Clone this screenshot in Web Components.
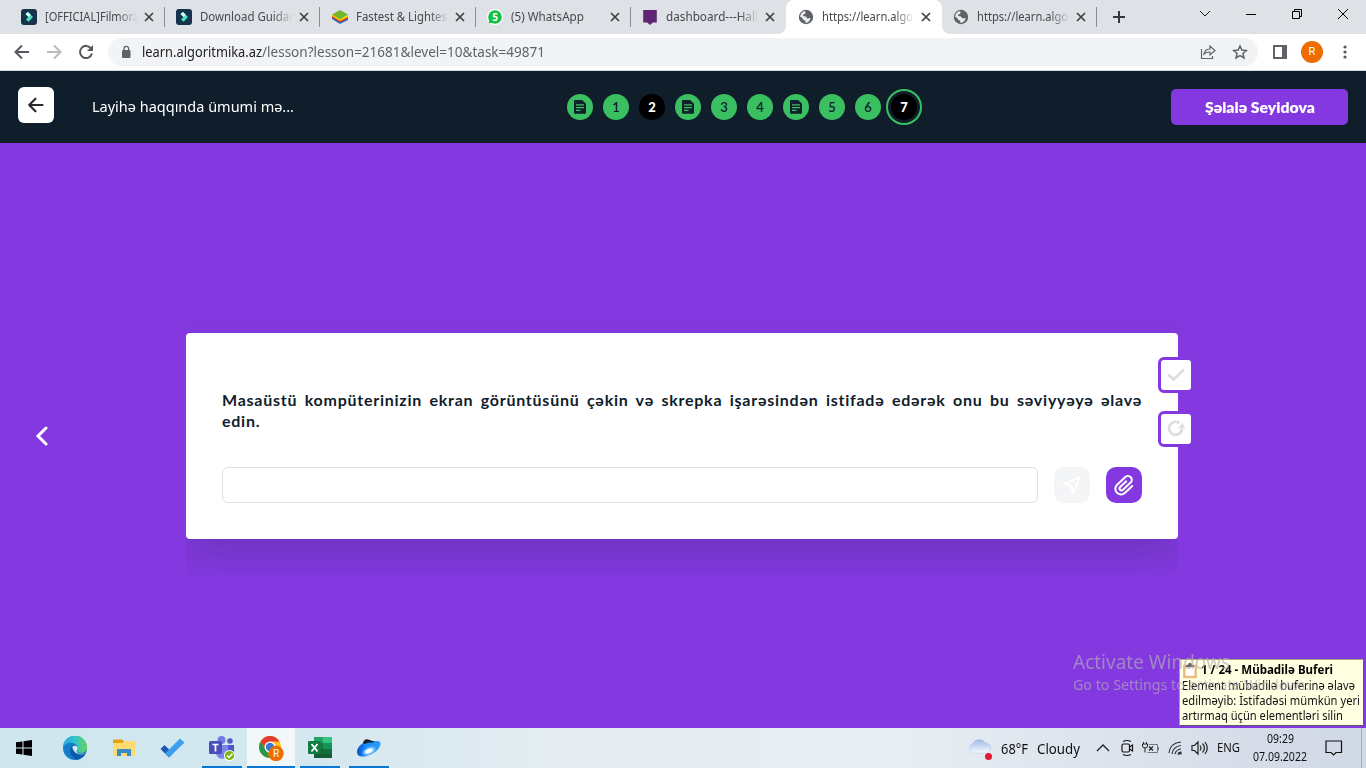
<!DOCTYPE html>
<html lang="az"><head><meta charset="utf-8"><title>Lesson</title>
<style>html,body{margin:0;height:100%;overflow:hidden}body{font-family:"Noto Sans","Open Sans",sans-serif}</style></head>
<body><lesson-desktop></lesson-desktop>
<script>
const make=(name,html,init)=>customElements.define(name,class extends HTMLElement{
  connectedCallback(){ if(this.shadowRoot)return; const r=this.attachShadow({mode:'open'});
    r.innerHTML='<style>*{box-sizing:border-box}svg{display:block;flex:none}</style>'+(typeof html==='function'?html(this):html); if(init)init(this,r);}
});

/* text run condensed or widened to the width of its label slot */
make('fit-text',`<style>:host{display:block;white-space:nowrap;flex:none}span{display:inline-block;transform-origin:0 50%}</style><span><slot></slot></span>`,(h,r)=>{
  const w=+h.getAttribute('w'),s=r.querySelector('span');h.style.width=w+'px';
  const n=s.offsetWidth; if(n) s.style.transform=`scaleX(${w/s.getBoundingClientRect().width})`;
});

const G={
 filmora:`<svg width="16" height="16" viewBox="0 0 16 16"><rect width="16" height="16" rx="3" fill="#15334a"/><path d="M4.500 5 7 3l5 5-4.500 4.800L5 10.500 7.500 8z" fill="#4fe3c1"/><path d="M4.500 5 7 3l2.700 2.700L7.500 8z" fill="#d9fff5"/></svg>`,
 blue:`<svg width="18" height="16" viewBox="0 0 18 16"><path d="m1 10 8 5 8-4V8L9 12 1 8z" fill="#1c74d8"/><path d="m1 8.500 8 5 8-4V7L9 11 1 6.500z" fill="#e62920"/><path d="m1 7 8 5 8-4V6L9 10 1 5z" fill="#ffd900"/><path d="m1 5.500 8-4.500 8 4.500-8 5z" fill="#73b72c"/></svg>`,
 wa:`<svg width="16" height="16" viewBox="0 0 16 16"><circle cx="8" cy="8" r="8" fill="#fff"/><path d="m.5 15 1.500-4.400L6 14z" fill="#fff"/><circle cx="8" cy="8" r="6.800" fill="#12c143"/><path d="m1.500 14.500 1-4 3 3z" fill="#12c143"/><text x="8" y="11.500" text-anchor="middle" font-size="10" font-weight="700" fill="#fff">5</text></svg>`,
 dash:`<svg width="16" height="17" viewBox="0 0 16 17"><path d="M1.200 1h13.600v12.500h-4L8 16l-2.800-2.500h-4z" fill="#602674"/></svg>`,
 globe:`<svg width="16" height="16" viewBox="0 0 16 16"><circle cx="8" cy="8" r="7.200" fill="#5f6368"/><path d="M7.500 2c-.9 1 .4 1.800-.2 2.600-.7.900-2.100.6-2.300 1.700-.1 1.100 1.700.9 2.800 1.200 1.200.4.700 1.500 1.600 1.900 1 .5 1.800-.6 3.100-.2A5.900 5.900 0 0 1 8 13.900c-.9-.3-.4-1.400-.9-2.100-.6-.8-2.200-.6-2.300-1.800-.1-1-1.200-1.800-2.700-2A5.900 5.900 0 0 1 7.500 2z" fill="#fff" opacity=".88"/></svg>`,
 x:`<svg width="12" height="12" viewBox="0 0 12 12" stroke="#3c4043" stroke-width="1.700"><path d="m2 2 8 8M10 2l-8 8"/></svg>`,
 doc:`<svg width="14" height="16" viewBox="0 0 14 16"><path d="M1.800 1h7.400L13 4.700v8.500c0 1-.6 1.600-1.500 1.600h-9C1.600 14.800 1 14.200 1 13.200V2c0-.7.300-1 .8-1z" fill="#10202c"/><path d="M3 5.800h8M3 8.600h8M3 11.300h4.500" stroke="#3abf61" stroke-width="1.200"/></svg>`
};

make('browser-tab',h=>`<style>:host{display:block;width:155.400px;height:34px;flex:none;font-size:12px;color:#45494d;position:relative}
.t{height:34px;display:grid;grid-template-columns:25px 94px 20px;padding-left:10.500px;align-items:center}
.i{width:18px;display:flex;justify-content:center}.c{overflow:hidden;line-height:18px;-webkit-mask:linear-gradient(90deg,#000 73px,transparent 93px)}
.x{display:flex;justify-content:center}:host([sep]) .t{background:linear-gradient(#888d93,#888d93) right 7px/1px 20px no-repeat}
:host([on]) .t{background:#fff;border-radius:8px 8px 0 0}
:host([on])::before,:host([on])::after{content:"";position:absolute;bottom:0;width:8px;height:8px}
:host([on])::before{left:-8px;background:radial-gradient(circle at 0 0,transparent 7.500px,#fff 8px)}
:host([on])::after{right:-8px;background:radial-gradient(circle at 100% 0,transparent 7.500px,#fff 8px)}</style>
<div class="t"><span class="i">${G[h.getAttribute('icon')]}</span><div class="c"><fit-text w="${h.getAttribute('w')}">${h.getAttribute('label').replace('&','&amp;')}</fit-text></div><span class="x">${G.x}</span></div>`);

make('browser-chrome',`<style>:host{display:block;height:71px;background:#fff;border-bottom:1px solid #d5d9dd}
.tabs{height:34px;background:#dee1e6;padding-left:9.400px;display:flex}.plus{margin-left:13.800px;align-self:center}
.win{margin-left:auto;display:flex;height:28px;align-items:center}.win svg{width:46px}
.bar{height:36px;display:flex;align-items:center}.nav{width:108px;display:flex;padding-left:14px;gap:16px}
.omni{width:1150px;height:28px;border-radius:14px;background:#f1f3f4;display:flex;align-items:center;padding-left:11px;font-size:14px;line-height:20px;color:#5f6368}
.omni .k{margin-right:9px}.dom{color:#202124}.acts{display:flex;margin-left:auto;gap:16px;padding-right:10px}
.right{display:flex;align-items:center;padding-left:14px}.av{width:22px;height:22px;border-radius:50%;background:#ef6c00;color:#fff;font:11px/22px Roboto;text-align:center;margin:0 14px 0 13px}</style>
<div class="tabs">
<browser-tab icon="filmora" label="[OFFICIAL]Filmora" w="94" sep></browser-tab><browser-tab icon="filmora" label="Download Guidar" w="94" sep></browser-tab><browser-tab icon="blue" label="Fastest & Lightes" w="91" sep></browser-tab><browser-tab icon="wa" label="(5) WhatsApp" w="73" sep></browser-tab><browser-tab icon="dash" label="dashboard---Hall" w="92"></browser-tab><browser-tab icon="globe" label="https://learn.algo" w="91" on></browser-tab><browser-tab icon="globe" label="https://learn.algo" w="91" sep></browser-tab>
<svg class="plus" width="16" height="16" stroke="#33373b" stroke-width="2"><path d="M8 2v12M2 8h12"/></svg>
<div class="win"><svg height="14" viewBox="-23 -7 46 14" fill="none" stroke="#222"><path d="m-5-3 5 5 5-5"/></svg><svg height="14" viewBox="-23 -7 46 14" stroke="#000"><path d="M-5 .5H5"/></svg><svg height="14" viewBox="-23 -7 46 14" fill="none" stroke="#000"><path d="M-4.500-2.500h7v7h-7zM-2.500-2.500v-2h7v7h-2"/></svg><svg height="14" viewBox="-23 -7 46 14" stroke="#000"><path d="m-5-5 10 10M5-5-5 5"/></svg></div>
</div>
<div class="bar"><div class="nav"><svg width="16" height="16" fill="none" stroke="#55595e" stroke-width="2"><path d="M15 8H2M8 1.500 1.500 8 8 14.500"/></svg><svg width="16" height="16" fill="none" stroke="#b9bcbf" stroke-width="2"><path d="M1 8h13M8 1.500 14.500 8 8 14.500"/></svg><svg width="16" height="16"><path d="M13.200 4.600A6.100 6.100 0 1 0 14 9.600" fill="none" stroke="#55595e" stroke-width="2"/><path d="M15 1v6H9z" fill="#55595e"/></svg></div>
<div class="omni"><svg class="k" width="14" height="14" viewBox="0 0 14 14"><rect x="3" y="5" width="8.500" height="8" rx="1" fill="#5f6368"/><path d="M5 5.500V3.600a2.300 2.300 0 0 1 4.600 0v1.900" fill="none" stroke="#5f6368" stroke-width="1.300"/></svg>
<fit-text class="dom" w="120">learn.algoritmika.az</fit-text><fit-text w="283">/lesson?lesson=21681&amp;level=10&amp;task=49871</fit-text>
<div class="acts"><svg width="17" height="17" viewBox="0 0 17 17" fill="none" stroke="#5f6368" stroke-width="1.200"><path d="M2.500 5v9.500h11V12M5 10c.7-3.200 2.800-5 6-5V2l5 4.500-5 4.500V8C8 8 6.500 8.500 5 10z"/></svg><svg width="16" height="17" viewBox="0 0 16 17" fill="none" stroke="#5f6368" stroke-width="1.500"><path d="m8 2 1.800 4.100 4.600.4-3.500 3 1.100 4.500L8 11.600 4 14l1.100-4.500-3.500-3 4.600-.4z"/></svg></div></div>
<div class="right"><svg width="16" height="16"><path d="M1 1h14v14H1z" fill="#5f6368"/><path d="M3 3h7v10H3z" fill="#fff"/></svg><div class="av">R</div><svg width="16" height="16" viewBox="0 0 16 16" fill="#55595e"><circle cx="8" cy="3" r="1.600"/><circle cx="8" cy="8" r="1.600"/><circle cx="8" cy="13" r="1.600"/></svg></div></div>`);

make('step-dot',h=>`<style>:host{display:flex;width:26px;height:26px;border-radius:50%;background:#3abf61;color:#10202c;align-items:center;justify-content:center;font:600 13px/26px Lato,sans-serif}
:host([dark]){background:#000;color:#fff;font-weight:900}:host([current]){outline:2px solid #3abf61;outline-offset:3px}</style>${h.hasAttribute('doc')?G.doc:'<slot></slot>'}`);

make('lesson-header',`<style>:host{display:grid;grid-template-columns:567px 1fr 177px;align-items:center;height:72px;background:#101d2b;padding-right:18px}
.l{display:flex;align-items:center;color:#fff;font-size:14px;line-height:20px;padding-left:18px;gap:38px}.b{width:36px;height:36px;border-radius:6px;background:#fff;display:grid;place-items:center;margin-top:-4px}
.s{display:flex;gap:10px}.u{height:36px;border-radius:5px;background:#8339df;color:#fff;font:800 14px/37px Lato,sans-serif;display:flex;justify-content:center}</style>
<div class="l"><div class="b"><svg width="18" height="18" viewBox="0 0 18 18" fill="none" stroke="#2b2b2b" stroke-width="2.200" stroke-linecap="round" stroke-linejoin="round"><path d="M15.500 9H3M8.500 2.700 2.200 9l6.300 6.300"/></svg></div><fit-text w="202">Layihə haqqında ümumi mə...</fit-text></div>
<div class="s"><step-dot doc></step-dot><step-dot>1</step-dot><step-dot dark>2</step-dot><step-dot doc></step-dot><step-dot>3</step-dot><step-dot>4</step-dot><step-dot doc></step-dot><step-dot>5</step-dot><step-dot>6</step-dot><step-dot dark current>7</step-dot></div>
<div class="u"><fit-text w="110">Şəlalə Seyidova</fit-text></div>`);

make('side-button',`<style>:host{display:grid;place-items:center;width:36px;height:36px;border:3px solid #8339df;border-radius:6px;background:#fff}</style><slot></slot>`);

make('task-card',`<style>:host{display:block;position:relative;width:992px;flex:none}
.clip{padding:36px 0;overflow:hidden}.card{height:206px;background:#fff;border-radius:4px;box-shadow:0 18px 36px rgba(15,28,42,.16);padding:56px 36px 36px}
.q{font:700 16px/21px Lato,sans-serif;color:#101d2b;letter-spacing:.750px;height:78px}.q div{text-align-last:justify;white-space:nowrap}.q p{margin:0}
.row{display:flex;gap:16px}.in{width:816px;height:36px;border:1px solid #dedfe1;border-radius:6px}.bt{width:36px;height:36px;border-radius:10px;display:grid;place-items:center;background:#f4f5f7}.p{background:#8339df}
.side{position:absolute;right:-16px;top:60px;display:grid;gap:18px}</style>
<div class="clip"><div class="card"><div class="q"><div>Masaüstü kompüterinizin ekran görüntüsünü çəkin və skrepka işarəsindən istifadə edərək onu bu səviyyəyə əlavə</div><p>edin.</p></div>
<div class="row"><div class="in"></div><div class="bt"><svg width="20" height="20" viewBox="0 0 20 20" fill="none" stroke="#fff" stroke-width="2" stroke-linejoin="round"><path d="M17.500 2.500 2 8.800l7 2.300 2.300 6.900z"/></svg></div><div class="bt p"><svg width="27" height="27" viewBox="0 0 24 24" fill="none" stroke="#fff" stroke-width="1.800" stroke-linecap="round"><g transform="rotate(47 12 12)"><path d="M17 7v9a5 5 0 0 1-10 0V6a3.400 3.400 0 0 1 6.800 0v9.500a1.700 1.700 0 0 1-3.400 0V8" transform="translate(0 .3)"/></g></svg></div></div></div></div>
<div class="side"><side-button><svg width="18" height="14" viewBox="0 0 18 14" fill="none" stroke="#dedede" stroke-width="3"><path d="m1.200 6.500 5.300 5L17 1.500"/></svg></side-button><side-button><svg width="18" height="18" viewBox="0 0 18 18"><path d="M12.500 3.200A6.500 6.500 0 1 0 15 9" fill="none" stroke="#dedede" stroke-width="2.800"/><path d="m15.300 2.500 3 6h-7z" fill="#dedede"/></svg></side-button></div>`);

make('clip-note',`<style>:host{display:block;width:185px;height:67px;box-sizing:border-box;background:#ffffe1;border:1px solid #aaa57e;border-right-color:#5b5b65;border-bottom-color:#5b5b65;font-size:12px;line-height:15px;color:#111;padding:2px 2px}
.h{display:flex;height:16px;font-weight:700;color:#000;gap:4px}.h svg{margin-left:1px}</style>
<div class="h"><svg width="14" height="17" viewBox="0 0 14 17"><path d="M1.300 4h11.400v11H1.300z" fill="#fff" stroke="#e8bd83" stroke-width="2.400"/><path d="M3 5V3h2c0-3 4-3 4 0h2v2z" fill="#686868"/></svg><fit-text w="132">1 / 24 - Mübadilə Buferi</fit-text></div>
<fit-text w="173">Element mübadilə buferinə əlavə</fit-text><fit-text w="178">edilməyib: İstifadəsi mümkün yeri</fit-text><fit-text w="161">artırmaq üçün elementləri silin</fit-text>`);

make('activation-mark',`<style>:host{display:block;color:rgba(178,172,184,.67)}.a{font-size:20px;line-height:25px}.b{font-size:14px;line-height:21px}</style><fit-text class="a" w="157">Activate Windows</fit-text><fit-text class="b" w="236">Go to Settings to activate Windows.</fit-text>`);

make('task-icon',`<style>:host{width:49px;height:40px;display:grid;place-items:center;flex:none}:host([run]){background:linear-gradient(#0878d4,#0878d4) center bottom/40px 2px no-repeat}:host([on]){background:linear-gradient(#0878d4,#0878d4) center bottom/48px 2px no-repeat,linear-gradient(#f2f7fa,#f2f7fa) center/48px 40px no-repeat}</style><slot></slot>`);

make('task-bar',`<style>:host{display:flex;height:40px;background:linear-gradient(90deg,#cee6ee 0,#d5e8ef 24%,#e5edf2 42%,#e8eef3 65%,#dde4ed 80%,#d1d8e6);align-items:center;font-size:14px;color:#111}
.w{width:50px;display:grid;place-items:center;padding-right:2px}.tray{margin-left:auto;display:flex;align-items:center;line-height:18px}.clock{font-size:12px;display:grid;justify-items:center;width:56px;margin:0 17px 0 12px}
</style><div class="w"><svg width="16" height="16" viewBox="0 0 16 16"><path d="M0 2.300 6.500 1.400V7.500H0zM7.500 1.300 16 0v7.500H7.500zM0 8.500h6.500v6.100L0 13.700zM7.500 8.500H16V16l-8.500-1.200z"/></svg></div>
<task-icon><svg width="24" height="24" viewBox="0 0 24 24"><defs><linearGradient id="g"><stop stop-color="#2aa9dd"/><stop offset=".55" stop-color="#35c4c5"/><stop offset="1" stop-color="#69d650"/></linearGradient></defs><circle cx="12" cy="12" r="12" fill="#117dcb"/><path d="M0 12a12 12 0 0 1 24-1c0 4-3 6-6.500 6-4.500 0-3-3-3-5C14.500 6 3 4 0 12z" fill="url(#g)"/><path d="M9 12c-1 5 3 10 9 8 2-.7 3.500-2 4-3-2 1.300-6 1-7 .2-2.800-1.800-.5-3-.5-5.200 0-3-5-3-5.500 0z" fill="#d3eaf2"/><path d="M9 9.500c-4 5-1 12 5 14.200 4-.6 7-3 8.500-6.500C17 20 10 18 9 9.500z" fill="#0d58a7"/></svg></task-icon>
<task-icon><svg width="22" height="20" viewBox="0 0 22 20"><path d="M0 1.500h9l2 2v4H0z" fill="#e3a20b"/><path d="M0 5h9.500l2-2H22v15H0z" fill="#fedb70"/><path d="M4 18v-7h14v7h-4v-3H8v3z" fill="#398ac9"/></svg></task-icon>
<task-icon><svg width="25" height="20" viewBox="0 0 25 20"><path d="m.5 11 4-4 8.500 8.500-4 4z" fill="#1b59b7"/><path d="m9 19.500-4-4L20 .5l4.500 4z" fill="#3ba0ee"/></svg></task-icon>
<task-icon run><svg width="26" height="26" viewBox="0 0 26 26"><circle cx="12.500" cy="5" r="4" fill="#747ce4"/><circle cx="21" cy="6" r="2.800" fill="#5259c7"/><path d="M17 10h8v7c0 4-5 6-8 4z" fill="#5057c4"/><path d="M7 10h12v8c0 7-10 8-12 1z" fill="#7c85eb"/><rect y="6" width="13" height="13" rx="1.500" fill="#4850b8"/><path d="M3.500 9.500h6M6.500 9.500v7" stroke="#fff" stroke-width="1.700"/><circle cx="20.500" cy="20.500" r="5.500" fill="#fff"/><circle cx="20.500" cy="20.500" r="4.600" fill="#79b810"/><path d="m18 20.500 2 2 3.500-4" fill="none" stroke="#fff" stroke-width="1.500"/></svg></task-icon>
<task-icon on><svg width="26" height="26" viewBox="0 0 26 26"><circle cx="12" cy="12" r="11" fill="#fbc116"/><path d="M2.500 6.500A11 11 0 0 1 21.500 6.500H12L8 15z" fill="#e33b2e"/><path d="M2.500 6.500 10 18l2 5A11 11 0 0 1 2.500 6.500z" fill="#279847"/><circle cx="12" cy="12" r="5.500" fill="#fff"/><circle cx="12" cy="12" r="4.200" fill="#3478dc"/><circle cx="18" cy="18.500" r="7.700" fill="#ef6c00"/><text x="18" y="22.300" text-anchor="middle" font-family="Roboto" font-size="10" fill="#fff">R</text></svg></task-icon>
<task-icon run><svg width="24" height="24" viewBox="0 0 24 24"><path d="M6 1h9v11H6z" fill="#21a366"/><path d="M15 1h9v6h-9z" fill="#33c481"/><path d="M15 7h9v6h-9z" fill="#159455"/><path d="M6 7h9v6H6z" fill="#107c41"/><path d="M6 13h18v9H6z" fill="#185c37"/><path d="M15 13h9v5h-9z" fill="#11713c"/><rect y="5" width="13" height="13" rx="1" fill="#107c41"/><path d="m3.500 8 6 7.500M9.500 8l-6 7.500" stroke="#fff" stroke-width="1.800"/></svg></task-icon>
<task-icon run><svg width="26" height="20" viewBox="0 0 26 20"><defs><linearGradient id="y" x2="1" y2="0"><stop stop-color="#0a52c4"/><stop offset=".4" stop-color="#1791ff"/><stop offset="1" stop-color="#2d9bf5"/></linearGradient><radialGradient id="z"><stop offset=".35" stop-color="#fff"/><stop offset="1" stop-color="#59b8ff" stop-opacity="0"/></radialGradient></defs><path d="M1 14C1 9 7 3 14 3c6 0 10-.5 10.500 2 .5 5-6 11-14 13-5 1.200-9.500.5-9.500-4z" fill="url(#y)"/><path d="M7 5C8 1.500 10 .5 13 1.800c4 1.500 6 1.600 5 2.200-2 .8-4 .4-6 .8-2.200.6-4 2.200-5 .2z" fill="#131d27"/><ellipse cx="13" cy="13" rx="8.500" ry="4.500" transform="rotate(-24 13 13)" fill="url(#z)"/></svg></task-icon>
<div class="tray"><svg width="26" height="24" viewBox="0 0 26 24"><defs><linearGradient id="c" x2="0" y2="1"><stop stop-color="#9db9e5"/><stop offset="1" stop-color="#f5f9ff"/></linearGradient></defs><path d="M6 17a5 5 0 0 1 0-9.500A7 7 0 0 1 18.500 7a5 5 0 0 1 1 10z" fill="url(#c)" stroke="#b0c6e6" stroke-width=".5"/><circle cx="21.500" cy="20.500" r="3.500" fill="#e31937"/></svg>
<fit-text w="27" style="margin-left:8px;margin-top:1px">68°F</fit-text><fit-text w="43" style="margin-left:9px;margin-top:1px">Cloudy</fit-text>
<svg style="margin-left:16px" width="14" height="14" fill="none" stroke="#222" stroke-width="1.300"><path d="m1 10 6-6 6 6"/></svg>
<svg style="margin-left:10px" width="14" height="18" viewBox="0 0 14 18" fill="none" stroke="#161616" stroke-width="1.200"><rect x="2" y="5" width="7.500" height="8" rx="1.500"/><path d="m9.500 8 3-2v6l-3-2M3 2.500q4-2 8 0M3 15.500q4 2 8 0"/></svg>
<svg style="margin-left:8px" width="18" height="14" viewBox="0 0 18 14" fill="none" stroke="#222"><path d="M1.500 1v2M4.500 1v2M.5 3h5v2q0 2-2.500 2T.5 5zM3 7v4.500"/><path d="M7 3.500h8.500v8H5.500M16.500 6v3" stroke="#777"/><path d="m7 5.500 4 4M11 5.500l-4 4" stroke-width="1.200"/></svg>
<svg style="margin-left:8px" width="15" height="16" viewBox="0 0 15 16" fill="none" stroke="#333" stroke-width="1.200"><path d="M1 13Q2 3 13 2M4 14q1-7.500 9-8.500M7 14q1-4.500 6-5"/><path d="M10 14q.5-2 3-2v2z" fill="#111"/></svg>
<svg style="margin-left:8px" width="17" height="16" viewBox="0 0 17 16" fill="none" stroke="#222" stroke-width="1.200"><path d="M1 5.500h2.500L7 2v12l-3.500-3.500H1zM9 5.500q2 2.500 0 5M11.500 3.500q4 4.500 0 9M14 2q4.500 6 0 12"/></svg>
<fit-text w="23" style="margin-left:9px;font-size:12px">ENG</fit-text><div class="clock"><fit-text w="27">09:29</fit-text><fit-text w="54">07.09.2022</fit-text></div>
<svg width="18" height="18" viewBox="0 0 18 18" fill="none" stroke="#111" stroke-width="1.200"><path d="M1 2h15.500v11.500H11L8.500 16 6 13.500H1z"/></svg><svg style="margin-left:18px" width="5" height="40"><path d="M.5 0v40" stroke="#a6adbb"/></svg></div>`);

make('lesson-desktop',`<style>:host{display:grid;grid-template-rows:71px 72px 585px 40px;width:1366px;height:768px;position:relative;overflow:hidden}
.stage{background:#8339df;display:flex;align-items:center;position:relative}.prev{width:186px;padding-left:35px}.stage task-card{margin-top:1px}
clip-note{position:absolute;right:2px;bottom:2px}activation-mark{position:absolute;left:1073px;top:506px}</style>
<browser-chrome></browser-chrome><lesson-header></lesson-header><main class="stage"><div class="prev"><svg width="15" height="20" viewBox="0 0 15 20" fill="none" stroke="#fff" stroke-width="3" stroke-linecap="round"><path d="m11 2-8 8 8 8"/></svg></div><task-card></task-card><clip-note></clip-note><activation-mark></activation-mark></main><task-bar></task-bar>`);
</script></body></html>
